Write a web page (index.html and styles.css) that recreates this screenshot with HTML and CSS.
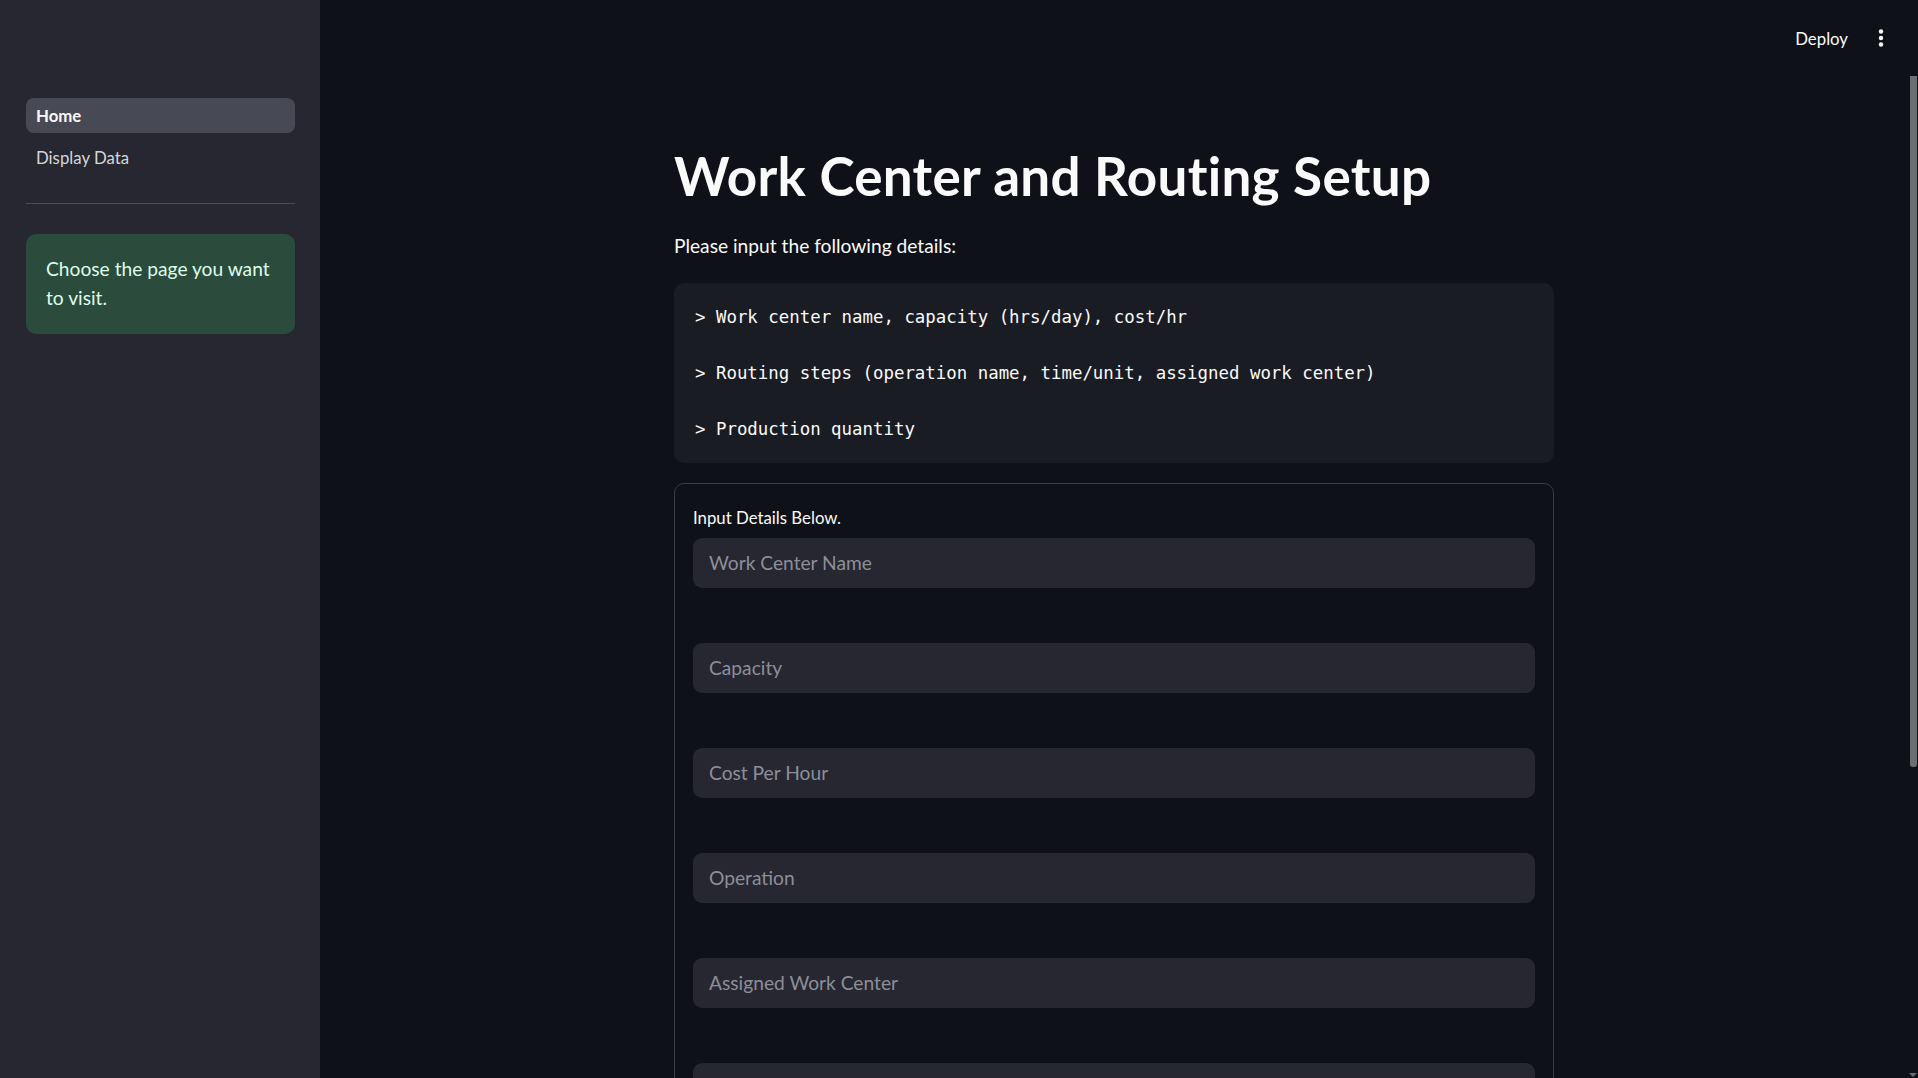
FILE: index.html
```html
<!DOCTYPE html>
<html lang="en">
<head>
<meta charset="utf-8">
<title>Work Center and Routing Setup</title>
<link rel="stylesheet" href="styles.css">
</head>
<body>
<div class="app">
  <aside class="sidebar">
    <nav class="nav">
      <a class="nav-item active" href="#">Home</a>
      <a class="nav-item" href="#">Display Data</a>
    </nav>
    <hr class="divider">
    <div class="info">Choose the page you want to visit.</div>
  </aside>
  <main class="main">
    <header class="topbar">
      <span class="deploy">Deploy</span>
      <span class="kebab">
        <svg width="24" height="24" viewBox="0 0 24 24"><circle cx="12" cy="5.5" r="2.2" fill="#fafafa"/><circle cx="12" cy="12" r="2.2" fill="#fafafa"/><circle cx="12" cy="18.5" r="2.2" fill="#fafafa"/></svg>
      </span>
    </header>
    <div class="content">
      <h1 class="title">Work Center and Routing Setup</h1>
      <p class="lead">Please input the following details:</p>
      <pre class="code">&gt; Work center name, capacity (hrs/day), cost/hr

&gt; Routing steps (operation name, time/unit, assigned work center)

&gt; Production quantity</pre>
      <form class="form">
        <div class="form-label">Input Details Below.</div>
        <div class="fields">
          <input class="field" type="text" placeholder="Work Center Name">
          <input class="field" type="text" placeholder="Capacity">
          <input class="field" type="text" placeholder="Cost Per Hour">
          <input class="field" type="text" placeholder="Operation">
          <input class="field" type="text" placeholder="Assigned Work Center">
          <input class="field" type="text" placeholder="Time Per Unit">
          <input class="field" type="text" placeholder="Production Quantity">
        </div>
      </form>
    </div>
  </main>
  <div class="scroll-thumb"></div>
  <div class="scroll-arrow"></div>
</div>
</body>
</html>
```
FILE: styles.css
```css
* { box-sizing: border-box; }
html, body {
  margin: 0;
  padding: 0;
  height: 100%;
  overflow: hidden;
  background: #0e1117;
  font-family: "Lato", "Noto Sans", sans-serif;
  font-variant-ligatures: none;
  color: #fafafa;
}
.app {
  display: flex;
  height: 100vh;
  position: relative;
}
.sidebar {
  width: 320px;
  flex: none;
  background: #262730;
  padding: 98px 25px 0 26px;
}
.nav {
  display: flex;
  flex-direction: column;
  gap: 7px;
}
.nav-item {
  display: flex;
  align-items: center;
  height: 35px;
  padding-left: 10px;
  border-radius: 8px;
  font-size: 16.8px;
  color: #d5d6da;
  text-decoration: none;
}
.nav-item.active {
  background: #474955;
  color: #fafafa;
  font-weight: 700;
}
.divider {
  border: none;
  border-top: 1px solid #4b4c55;
  margin: 28px 0 30px;
}
.info {
  background: #2b4b3c;
  color: #dffde9;
  border-radius: 10px;
  padding: 20px 22px 22px 20px;
  font-size: 19.2px;
  line-height: 29px;
}
.main {
  flex: 1;
  min-width: 0;
  padding-right: 10px;
  display: flex;
  flex-direction: column;
}
.topbar {
  height: 76px;
  flex: none;
  display: flex;
  align-items: center;
  justify-content: flex-end;
  padding-right: 15px;
  gap: 21px;
}
.deploy {
  font-size: 16.8px;
  color: #fafafa;
}
.kebab {
  display: flex;
  width: 24px;
  height: 24px;
}
.content {
  width: 880px;
  margin: 0 auto;
}
.title {
  margin: 68px 0 0;
  font-size: 53px;
  line-height: 1.2;
  font-weight: 700;
  letter-spacing: 0.3px;
  color: #fafafa;
}
.lead {
  margin: 23px 0 0;
  font-size: 19.2px;
  line-height: 30.4px;
}
.code {
  margin: 22px 0 0;
  background: #1a1c24;
  border-radius: 10px;
  padding: 20px 21px;
  font-family: "DejaVu Sans Mono", "Liberation Mono", monospace;
  font-size: 17.4px;
  line-height: 28px;
  color: #fafafa;
}
.form {
  margin: 20px 0 0;
  border: 1px solid #3b3d44;
  border-radius: 10px;
  padding: 23px 18px 40px;
}
.form-label {
  font-size: 16.8px;
  line-height: 22px;
  color: #fafafa;
}
.fields {
  margin-top: 9px;
  display: flex;
  flex-direction: column;
  gap: 55px;
}
.field {
  display: block;
  width: 100%;
  height: 50px;
  border: none;
  outline: none;
  border-radius: 9px;
  background: #262730;
  padding: 0 16px 2px;
  font-family: "Lato", "Noto Sans", sans-serif;
  font-size: 19.2px;
  color: #fafafa;
}
.field::placeholder {
  color: #8d8f98;
}
.scroll-thumb {
  position: absolute;
  right: 1px;
  top: 76px;
  width: 7px;
  height: 691px;
  background: #6d6e72;
  border-radius: 0 0 3px 3px;
}
.scroll-arrow {
  position: absolute;
  right: 1px;
  bottom: 1px;
  width: 0;
  height: 0;
  border-left: 4px solid transparent;
  border-right: 4px solid transparent;
  border-top: 4px solid #6d6e72;
}
```
